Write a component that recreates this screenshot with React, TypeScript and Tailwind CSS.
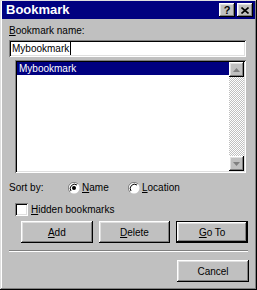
import React from 'react';

const raised =
  'shadow-[inset_-1px_-1px_#000,inset_1px_1px_#fff,inset_-2px_-2px_#808080,inset_2px_2px_#dfdfdf]';
const sunken =
  'shadow-[inset_1px_1px_#808080,inset_-1px_-1px_#fff,inset_2px_2px_#000,inset_-2px_-2px_#dfdfdf]';

function U({ children }: { children: React.ReactNode }) {
  return <span className="underline underline-offset-[1px]">{children}</span>;
}

function Radio({ checked }: { checked?: boolean }) {
  return (
    <svg width="12" height="12" viewBox="0 0 12 12" className="shrink-0">
      <circle cx="6" cy="6" r="5.5" fill="#fff" />
      <path d="M10 2 A5.5 5.5 0 0 0 2 10" stroke="#808080" strokeWidth="1" fill="none" />
      <path d="M9 3 A4.3 4.3 0 0 0 3 9" stroke="#000" strokeWidth="1" fill="none" />
      {checked && <circle cx="6" cy="6" r="2" fill="#000" />}
    </svg>
  );
}

function Button({
  children,
  isDefault,
}: {
  children: React.ReactNode;
  isDefault?: boolean;
}) {
  return (
    <button
      className={`w-[72px] h-[22px] flex items-center justify-center bg-[#c0c0c0] text-[10px] text-black ${
        isDefault ? 'border border-black' : ''
      } ${raised}`}
    >
      {children}
    </button>
  );
}

function ScrollArrow({ down }: { down?: boolean }) {
  return (
    <div className={`w-[15px] h-[15px] bg-[#c0c0c0] flex items-center justify-center ${raised}`}>
      <svg width="7" height="4" viewBox="0 0 7 4">
        <path d={down ? 'M0 0h7L3.5 4z' : 'M3.5 0L7 4H0z'} fill="#808080" />
      </svg>
    </div>
  );
}

export default function App() {
  return (
    <div
      className="w-[257px] h-[290px] bg-[#c0c0c0] px-[2px] pt-[1px] text-black flex flex-col shadow-[inset_-1px_-1px_#000,inset_1px_1px_#dfdfdf,inset_-2px_-2px_#808080,inset_2px_2px_#fff]"
      style={{ fontFamily: '"Liberation Sans", Arial, sans-serif' }}
    >
      {/* title bar */}
      <div className="h-[18px] bg-[#000080] flex items-center justify-between pl-[4px] pr-[2px]">
        <span className="text-white font-bold text-[13px]">Bookmark</span>
        <div className="flex gap-[2px]">
          <div className={`w-[16px] h-[14px] bg-[#c0c0c0] flex items-center justify-center text-[11px] font-bold leading-none ${raised}`}>
            ?
          </div>
          <div className={`w-[16px] h-[14px] bg-[#c0c0c0] flex items-center justify-center ${raised}`}>
            <svg width="8" height="7" viewBox="0 0 8 7">
              <path d="M0.5 0.5l7 6M7.5 0.5l-7 6" stroke="#000" strokeWidth="1.6" />
            </svg>
          </div>
        </div>
      </div>

      <div className="flex flex-col px-[7px] text-[10px]">
        <div className="mt-[5px] h-[14px] leading-[14px]">
          <U>B</U>ookmark name:
        </div>
        <div className={`mt-[2px] h-[17px] bg-white flex items-center px-[3px] w-[237px] ${sunken}`}>
          Mybookmark<span className="inline-block w-px h-[13px] bg-black ml-px" />
        </div>

        {/* list */}
        <div className={`mt-[3px] ml-[6px] w-[231px] h-[113px] bg-white flex p-[2px] ${sunken}`}>
          <div className="flex-1">
            <div className="h-[13px] bg-[#000080] text-white leading-[13px] pl-[2px]">Mybookmark</div>
          </div>
          <div className="w-[15px] flex flex-col">
            <ScrollArrow />
            <div className="flex-1 bg-[repeating-conic-gradient(#c0c0c0_0_25%,#fff_0_50%)] bg-[length:2px_2px]" />
            <ScrollArrow down />
          </div>
        </div>

        {/* sort */}
        <div className="mt-[8px] flex items-center h-[13px]">
          <span className="w-[59px]">Sort by:</span>
          <Radio checked />
          <span className="ml-[2px] w-[46px]">
            <U>N</U>ame
          </span>
          <Radio />
          <span className="ml-[2px]">
            <U>L</U>ocation
          </span>
        </div>

        <div className="mt-[9px] ml-[6px] flex items-center h-[13px]">
          <div className={`w-[13px] h-[13px] bg-white ${sunken}`} />
          <span className="ml-[3px]">
            <U>H</U>idden bookmarks
          </span>
        </div>

        <div className="mt-[5px] flex gap-[6px] ml-[12px]">
          <Button>
            <U>A</U>dd
          </Button>
          <Button>
            <U>D</U>elete
          </Button>
          <Button isDefault>
            <U>G</U>o To
          </Button>
        </div>

        <div className="mt-[7px] h-[2px] border-t border-[#808080] border-b border-b-white" />

        <div className="mt-[8px] flex justify-end mr-[-1px]">
          <Button>Cancel</Button>
        </div>
      </div>
    </div>
  );
}
